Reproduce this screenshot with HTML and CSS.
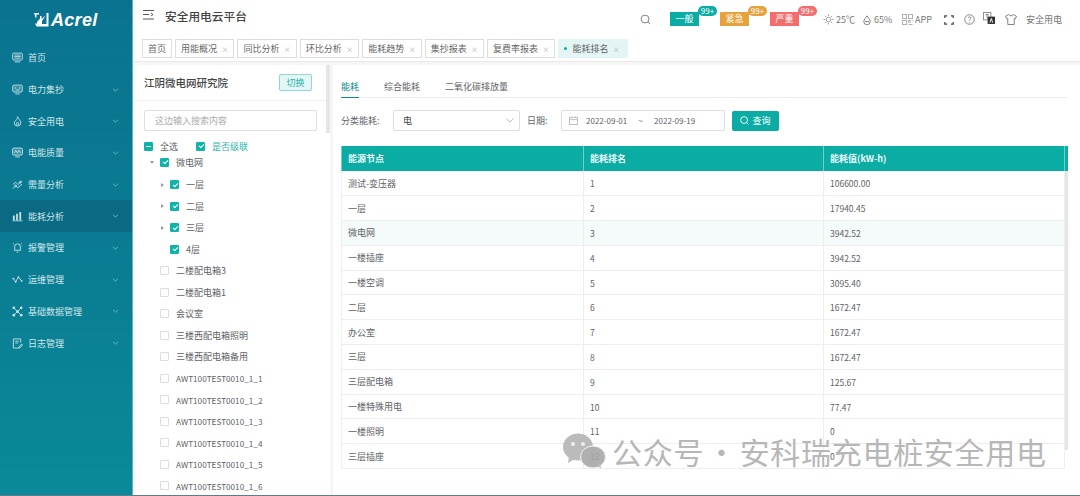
FILE: index.html
```html
<!DOCTYPE html>
<html lang="zh-CN">
<head>
<meta charset="utf-8">
<title>安全用电云平台</title>
<link rel="stylesheet" href="styles.css">
</head>
<body>
<div class="app">
  <aside class="sidebar">
    <div class="logo">
      <svg class="logo-mark" viewBox="0 0 15 14"><path d="M0 0h5v1.500H2.500V4L2 5.500zM14.500 0v13.500H2.500L1 10.500h2V9l3-3.500V3H7.500v2.500h1L10 3.500h1L8 8v3h4.500V0z"/></svg>
      <span class="logo-text">Acrel</span>
    </div>
    <nav class="menu">
      <a class="menu-item"><svg class="mi" viewBox="0 0 12 12"><rect x=".8" y="1.200" width="10.400" height="7.600" rx="1"/><path d="M2.500 3.300h7M2.500 5h7M2.500 6.700h7M3 10.800h6"/></svg><span>首页</span></a>
      <a class="menu-item"><svg class="mi" viewBox="0 0 12 12"><rect class="mi-soft" x=".8" y="1.200" width="10.400" height="7.600" rx="1.500"/><path d="M3.500 3.500v1.500M8.500 3.500v1.500M4 6.500h4M3.500 10.800h5"/></svg><span>电力集抄</span><svg class="chev" viewBox="0 0 8 5"><path d="M1 1l3 3 3-3"/></svg></a>
      <a class="menu-item"><svg class="mi" viewBox="0 0 12 12"><path d="M6 .8c.5 2 3.500 3.700 3.500 6.700a3.500 3.500 0 0 1-7 0C2.500 6 4 5.500 4.500 4.300 5.500 3.800 6 2.300 6 .8z"/><path d="M6 6.500c.8.800 1.200 1.400 1.200 2a1.200 1.200 0 0 1-2.400 0c0-.6.400-1.200 1.200-2z"/></svg><span>安全用电</span><svg class="chev" viewBox="0 0 8 5"><path d="M1 1l3 3 3-3"/></svg></a>
      <a class="menu-item"><svg class="mi" viewBox="0 0 12 12"><rect class="mi-soft" x=".5" y="1.200" width="11" height="7.600" rx="1.500"/><path d="M2.500 6.500l1.500-3L6 6.500l1.500-3 2 3M3.500 10.800h5"/></svg><span>电能质量</span><svg class="chev" viewBox="0 0 8 5"><path d="M1 1l3 3 3-3"/></svg></a>
      <a class="menu-item"><svg class="mi" viewBox="0 0 12 12"><path d="M1 6l3-2.500L6.500 6 11 2M1 10.500l3-3 2.500 2L11 5.500"/><circle cx="9" cy="3.500" r="1"/><circle cx="4" cy="7.500" r="1"/></svg><span>需量分析</span><svg class="chev" viewBox="0 0 8 5"><path d="M1 1l3 3 3-3"/></svg></a>
      <a class="menu-item active"><svg class="mi mi-fill" viewBox="0 0 12 12"><path d="M1 5h2v5H1zM4.500 3h2v7h-2zM8 1h2v9H8zM.5 10.300h11v1H.5z"/></svg><span>能耗分析</span><svg class="chev" viewBox="0 0 8 5"><path d="M1 1l3 3 3-3"/></svg></a>
      <a class="menu-item"><svg class="mi" viewBox="0 0 12 12"><path d="M3 8.500V5a3 3 0 0 1 6 0v3.500M2 9h8M1.500 1.500L2.500 2.500M10.500 1.500L9.500 2.500M1 4h.5M10.500 4h.5M5 11h2"/></svg><span>报警管理</span><svg class="chev" viewBox="0 0 8 5"><path d="M1 1l3 3 3-3"/></svg></a>
      <a class="menu-item"><svg class="mi" viewBox="0 0 12 12"><path d="M1.500 5l2.500 3.500 3-5 3.500 4"/><circle class="mi-dot" cx="1.500" cy="5" r="1"/><circle class="mi-dot" cx="4" cy="8.500" r="1"/><circle class="mi-dot" cx="7" cy="3.500" r="1"/><circle class="mi-dot" cx="10.500" cy="7.500" r="1"/></svg><span>运维管理</span><svg class="chev" viewBox="0 0 8 5"><path d="M1 1l3 3 3-3"/></svg></a>
      <a class="menu-item"><svg class="mi" viewBox="0 0 12 12"><path d="M2 2l8 8M10 2l-8 8"/><circle class="mi-dot" cx="2" cy="2" r="1.500"/><circle class="mi-dot" cx="10" cy="2" r="1.500"/><circle class="mi-dot" cx="2" cy="10" r="1.500"/><circle class="mi-dot" cx="10" cy="10" r="1.500"/><circle class="mi-dot" cx="6" cy="6" r="1.500"/></svg><span>基础数据管理</span><svg class="chev" viewBox="0 0 8 5"><path d="M1 1l3 3 3-3"/></svg></a>
      <a class="menu-item"><svg class="mi" viewBox="0 0 12 12"><path d="M9.500 5V1h-8v10h6M3.500 3.500h4M3.500 5.500h3M7.500 10l3-3.500 1 1-3 3.500H7.500z"/></svg><span>日志管理</span><svg class="chev" viewBox="0 0 8 5"><path d="M1 1l3 3 3-3"/></svg></a>
    </nav>
  </aside>

  <div class="main">
    <header class="topbar">
      <svg class="fold" viewBox="0 0 12 10"><path d="M0 .5h11M0 4.500h6M0 9h11M8 3l2 1.500L8 6"/></svg>
      <h1 class="platform">安全用电云平台</h1>
      <svg class="search-ico" viewBox="0 0 12 12"><circle cx="5.500" cy="5.500" r="4.300"/><path d="M8.700 8.700l2.300 2.300"/></svg>
      <div class="alarms">
        <span class="alarm teal">一般<b>99+</b></span>
        <span class="alarm orange">紧急<b>99+</b></span>
        <span class="alarm red">严重<b>99+</b></span>
      </div>
      <div class="tools">
        <span class="tool"><svg class="ti" viewBox="0 0 12 12"><circle cx="6" cy="6" r="2.500"/><path d="M6 .5v2M6 9.500v2M.5 6h2M9.500 6h2M2 2l1.500 1.500M8.500 8.500L10 10M10 2L8.500 3.500M3.500 8.500L2 10"/></svg>25℃</span>
        <span class="tool tool-drop"><svg class="ti ti-sm" viewBox="0 0 10 12"><path d="M5 .8C6 3 9 5 9 8a4 4 0 0 1-8 0C1 5 4 3 5 .8z"/><path class="drop-in" d="M2.500 8h5"/></svg>65%</span>
        <span class="tool tool-app"><svg class="ti ti-app" viewBox="0 0 12 12"><rect x=".5" y=".5" width="4.500" height="4.500"/><rect x="7" y=".5" width="4.500" height="4.500"/><rect x=".5" y="7" width="4.500" height="4.500"/><path d="M7 7h2v2H7zM11.500 7v1M7 11.500h4.500"/></svg>APP</span>
        <svg class="ti ti-expand" viewBox="0 0 10 10"><path d="M.8 3V.8H3M7 .8h2.200V3M.8 7v2.200H3M7 9.200h2.200V7"/></svg>
        <svg class="ti ti-help" viewBox="0 0 12 12"><circle cx="6" cy="6" r="5.200"/><path d="M4.500 4.500a1.500 1.500 0 1 1 2.200 1.400c-.5.300-.7.600-.7 1.100M6 8.500v.8"/></svg>
        <svg class="ti ti-lang" viewBox="0 0 13 13"><rect class="lang-a" x=".5" y=".5" width="8" height="8"/><path class="lang-a" d="M2.500 3h4M4.500 2v5"/><rect class="lang-b" x="5" y="5" width="8" height="8"/><path class="lang-c" d="M7.500 11.500L9 7l1.500 4.500"/></svg>
        <svg class="ti ti-shirt" viewBox="0 0 13 12"><path d="M4 .5L.5 2.500l1.500 3 1-.5v6.500h7V5l1 .5 1.500-3L9 .5c-.5 2-4.500 2-5 0z"/></svg>
        <span class="user">安全用电</span>
      </div>
    </header>

    <div class="tabs">
      <span class="tab">首页</span>
      <span class="tab">用能概况<i>×</i></span>
      <span class="tab">同比分析<i>×</i></span>
      <span class="tab">环比分析<i>×</i></span>
      <span class="tab">能耗趋势<i>×</i></span>
      <span class="tab">集抄报表<i>×</i></span>
      <span class="tab">复费率报表<i>×</i></span>
      <span class="tab current"><em></em>能耗排名<i>×</i></span>
    </div>

    <div class="content">
      <section class="tree-panel">
        <div class="org">
          <strong>江阴微电网研究院</strong>
          <button class="switch">切换</button>
        </div>
        <div class="tree-body">
          <div class="search-box">这边输入搜索内容</div>
          <div class="tree-head">
            <span class="cb partial"></span><span class="all">全选</span>
            <span class="cb on"></span><span class="cascade">是否级联</span>
          </div>
          <ul class="tree">
            <li class="l1 first"><em class="caret down"></em><span class="cb on"></span>微电网</li>
            <li class="l2"><em class="caret"></em><span class="cb on"></span>一层</li>
            <li class="l2"><em class="caret"></em><span class="cb on"></span>二层</li>
            <li class="l2"><em class="caret"></em><span class="cb on"></span>三层</li>
            <li class="l2"><em class="caret none"></em><span class="cb on"></span>4层</li>
            <li class="l1"><span class="cb"></span>二楼配电箱3</li>
            <li class="l1"><span class="cb"></span>二楼配电箱1</li>
            <li class="l1"><span class="cb"></span>会议室</li>
            <li class="l1"><span class="cb"></span>三楼西配电箱照明</li>
            <li class="l1"><span class="cb"></span>三楼西配电箱备用</li>
            <li class="l1 code"><span class="cb"></span>AWT100TEST0010_1_1</li>
            <li class="l1 code"><span class="cb"></span>AWT100TEST0010_1_2</li>
            <li class="l1 code"><span class="cb"></span>AWT100TEST0010_1_3</li>
            <li class="l1 code"><span class="cb"></span>AWT100TEST0010_1_4</li>
            <li class="l1 code"><span class="cb"></span>AWT100TEST0010_1_5</li>
            <li class="l1 code"><span class="cb"></span>AWT100TEST0010_1_6</li>
          </ul>
        </div>
        <div class="tree-scroll"></div>
      </section>

      <section class="data-panel">
        <div class="subtabs">
          <span class="subtab on">能耗</span>
          <span class="subtab">综合能耗</span>
          <span class="subtab">二氧化碳排放量</span>
        </div>
        <div class="filters">
          <label class="f-label">分类能耗:</label>
          <div class="select">电<svg viewBox="0 0 8 5"><path d="M.5 .5L4 4 7.500 .5"/></svg></div>
          <label class="f-label date-label">日期:</label>
          <div class="range">
            <svg viewBox="0 0 10 10"><rect x=".5" y="1.500" width="9" height="8"/><path d="M.5 4h9M3 .5v2M7 .5v2"/></svg>
            <span>2022-09-01</span><span class="tilde">~</span><span>2022-09-19</span>
          </div>
          <button class="query"><svg viewBox="0 0 10 10"><circle cx="4.500" cy="4.500" r="3.800"/><path d="M7.300 7.300l2 2"/></svg>查询</button>
        </div>
        <div class="table-wrap">
          <table class="rank">
            <thead><tr><th>能源节点</th><th>能耗排名</th><th>能耗值(kW-h)</th></tr></thead>
            <tbody>
              <tr><td>测试-变压器</td><td>1</td><td>106600.00</td></tr>
              <tr><td>一层</td><td>2</td><td>17940.45</td></tr>
              <tr class="hover"><td>微电网</td><td>3</td><td>3942.52</td></tr>
              <tr><td>一楼插座</td><td>4</td><td>3942.52</td></tr>
              <tr><td>一楼空调</td><td>5</td><td>3095.40</td></tr>
              <tr><td>二层</td><td>6</td><td>1672.47</td></tr>
              <tr><td>办公室</td><td>7</td><td>1672.47</td></tr>
              <tr><td>三层</td><td>8</td><td>1672.47</td></tr>
              <tr><td>三层配电箱</td><td>9</td><td>125.67</td></tr>
              <tr><td>一楼特殊用电</td><td>10</td><td>77.47</td></tr>
              <tr><td>一楼照明</td><td>11</td><td>0</td></tr>
              <tr><td>三层插座</td><td>12</td><td>0</td></tr>
            </tbody>
          </table>
          <div class="head-gutter"></div>
          <div class="table-scroll"></div>
        </div>
      </section>
    </div>
  </div>
</div>
<div class="edge"></div>

<div class="watermark">
  <svg viewBox="0 0 44 36"><ellipse class="wm-a" cx="16" cy="14" rx="15" ry="13.500"/><path class="wm-a" d="M7 23l-1 7 8-5z"/><circle class="wm-d" cx="11" cy="11" r="2"/><circle class="wm-d" cx="21" cy="11" r="2"/><ellipse class="wm-b" cx="31" cy="24" rx="12.500" ry="11"/><path class="wm-a" d="M36 33l3 3-1-6z"/></svg>
  <span>公众号 · 安科瑞充电桩安全用电</span>
</div>
</body>
</html>
```
FILE: styles.css
```css
* { box-sizing: border-box; }
html, body { margin: 0; height: 496px; overflow: hidden; }
body {
  font-family: "Noto Sans CJK SC", "Noto Sans", sans-serif;
  font-size: 9px;
  color: #606266;
  background: #fff;
  display: flex;
  flex-direction: column;
}
.app { display: flex; height: 495px; }
.edge { height: 1px; background: #66788a; }
ul { list-style: none; margin: 0; padding: 0; }
svg { display: block; fill: none; stroke: currentColor; stroke-width: 1; flex: none; }

/* sidebar */
.sidebar {
  width: 133px;
  flex: none;
  background: linear-gradient(180deg, #0a7490 0%, #0a7a92 45%, #0a8a98 100%);
  border-right: 1px solid #58b4c0;
  color: #cfe6ea;
}
.logo { height: 42px; padding: 13px 0 0 34px; display: flex; align-items: flex-start; gap: 2px; color: #fff; }
.logo-mark { width: 15px; height: 14px; stroke: none; fill: #fff; }
.logo-text {
  font-family: "Liberation Sans", Arial, sans-serif;
  font-weight: 700; font-style: italic; font-size: 18px; line-height: 14px; letter-spacing: .3px;
}
.menu { display: flex; flex-direction: column; }
.menu-item { height: 31.700px; display: flex; align-items: center; padding-left: 12px; font-size: 9px; }
.menu-item span { margin-left: 5px; flex: 1; }
.menu-item.active { background: #0a6a84; }
.mi { width: 11px; height: 11px; color: #c4e0e6; stroke-width: 1; }
.mi-soft { fill: rgba(196, 224, 230, .25); }
.mi-dot { fill: #c4e0e6; stroke: none; }
.mi-fill { fill: #c4e0e6; stroke: none; }
.chev { width: 7px; height: 4px; margin-right: 13px; color: #8cc4d0; }

/* main column */
.main { flex: 1; min-width: 0; display: flex; flex-direction: column; }
.topbar { height: 36px; flex: none; display: flex; align-items: center; padding-left: 10px; position: relative; }
.fold { width: 12px; height: 10px; color: #555; margin-top: -7px; }
.platform { margin: -5px 0 0 10px; font-size: 11.700px; font-weight: 500; color: #444; width: 475px; }
.search-ico { width: 11px; height: 11px; color: #777; margin-top: 3px; }
.alarms { display: flex; margin: 2px 0 0 19px; gap: 21px; }
.alarm { width: 29px; height: 14px; color: #fff; line-height: 14px; text-align: center; position: relative; font-size: 9px; }
.alarm b {
  position: absolute; left: 28px; top: -6px; width: 19px; height: 10px;
  border-radius: 5px; background: inherit; font-weight: 400; font-size: 8px; line-height: 10px;
}
.teal { background: #0aaca4; }
.orange { background: #e6a23c; }
.red { background: #f56c6c; }
.tools { display: flex; align-items: center; margin: 3px 0 0 24px; color: #777; }
.tool { display: flex; align-items: center; gap: 2px; width: 40px; }
.tool-drop { gap: 3px; width: 39px; }
.tool-app { width: 42px; }
.ti { width: 11px; height: 11px; color: #999; }
.ti-sm { width: 8px; height: 10px; color: #666; }
.drop-in { stroke: #666; }
.ti-app { color: #aaa; }
.ti-expand { width: 10px; height: 10px; color: #444; stroke-width: 1.200; }
.ti-help { margin-left: 10px; color: #777; }
.ti-lang { width: 12px; height: 12px; margin: -3px 0 0 8px; }
.lang-a { stroke: #888; }
.lang-b { fill: #333; stroke: none; }
.lang-c { stroke: #fff; }
.ti-shirt { width: 12px; height: 11px; margin-left: 10px; color: #777; }
.user { margin-left: 9px; white-space: nowrap; }

/* tabs */
.tabs { height: 26px; flex: none; display: flex; gap: 3px; padding: 3px 0 0 9px; border-bottom: 1px solid #e8e8e8; align-items: flex-start; }
.tab { height: 19px; padding: 0 5px; border: 1px solid #ddd; display: flex; align-items: center; color: #666; font-size: 9px; white-space: nowrap; background: #fff; }
.tab i { font-style: normal; font-size: 7px; color: #aaa; margin-left: 4.400px; }
.tab.current { background: #e3f5f4; border-color: #e3f5f4; padding-right: 7px; }
.tab em { width: 3px; height: 3px; border-radius: 50%; background: #0aaca4; margin-right: 5px; }

/* content */
.content { flex: 1; min-height: 0; display: flex; background: #f6f6f6; padding-top: 3px; gap: 3px; }

.tree-panel { width: 197px; flex: none; background: #fff; position: relative; overflow: hidden; }
.tree-scroll { position: absolute; right: 0; top: 0; width: 4px; height: 68px; background: #e6e6e6; }
.org { height: 36px; padding: 0 18px 0 11px; display: flex; align-items: center; justify-content: space-between; border-bottom: 1px solid #f0f0f0; }
.org strong { font-size: 10.500px; font-weight: 500; color: #444; }
.switch { width: 33px; height: 17px; padding: 0; font: inherit; color: #2db5ad; background: #e3f5f4; border: 1px solid #8ed8d3; border-radius: 2px; }
.tree-body { padding: 9px 13px 0 11px; }
.search-box { height: 21px; border: 1px solid #ddd; border-radius: 2px; line-height: 19px; padding-left: 10px; color: #aaa; }
.tree-head { display: flex; align-items: center; height: 14px; margin-top: 8px; }
.all { margin: 0 18px 0 7px; }
.cascade { margin-left: 7px; color: #2db5ad; }
.cb { width: 9px; height: 9px; flex: none; border: 1px solid #ddd; border-radius: 1px; background: #fff; position: relative; }
.cb.on, .cb.partial { background: #0fb3aa; border-color: #0fb3aa; }
.cb.on::after { content: ""; position: absolute; left: 2.500px; top: 0.500px; width: 2px; height: 4px; border: solid #fff; border-width: 0 1px 1px 0; transform: rotate(45deg); }
.cb.partial::after { content: ""; position: absolute; left: 1px; top: 3px; width: 5px; height: 1px; background: #fff; }
.tree { margin-top: 3px; }
.tree li { height: 21.500px; display: flex; align-items: center; white-space: nowrap; }
.tree li .cb { margin-right: 7px; }
.tree .first { height: 12px; margin-bottom: 6px; }
.tree .l1 { padding-left: 16px; }
.tree .first.l1 { padding-left: 6px; }
.tree .l2 { padding-left: 17px; }
.tree .code { font-size: 8.200px; }
.caret { width: 0; height: 0; flex: none; margin-right: 6px; border: solid transparent; border-width: 2.500px 0 2.500px 3px; border-left-color: #999; }
.caret.down { border-width: 3px 2.500px 0; border-color: #999 transparent transparent; margin-right: 6px; }
.caret.none { border-color: transparent; }

.data-panel { flex: 1; min-width: 0; background: #fff; padding: 0 12px 0 8px; }
.subtabs { height: 33px; display: flex; gap: 25px; align-items: flex-end; border-bottom: 1px solid #eee; }
.subtab { height: 17px; }
.subtab.on { color: #0a8a88; border-bottom: 1px solid #0a8a88; margin-bottom: -1px; height: 18px; }
.filters { display: flex; align-items: center; height: 21px; margin-top: 12px; }
.f-label { width: 52px; flex: none; }
.date-label { width: 34px; margin-left: 7px; }
.select { width: 127px; height: 21px; border: 1px solid #ddd; border-radius: 2px; padding: 0 0 0 9px; display: flex; align-items: center; justify-content: space-between; color: #444; }
.select svg { width: 8px; height: 5px; margin-right: 5px; color: #bbb; }
.range { width: 164px; height: 21px; border: 1px solid #ddd; border-radius: 2px; padding-left: 7px; display: flex; align-items: center; font-size: 8px; }
.range svg { width: 9px; height: 9px; color: #bbb; margin-right: 8px; }
.tilde { width: 27px; text-align: center; }
.query { width: 47px; height: 20px; margin-left: 7px; padding: 0; border: 0; border-radius: 2px; background: #0aaca4; color: #fff; font: inherit; display: flex; align-items: center; justify-content: center; gap: 3px; }
.query svg { width: 9px; height: 9px; }

.table-wrap { margin-top: 15px; position: relative; width: 727px; }
.rank { width: 724px; border-collapse: collapse; table-layout: fixed; }
.rank th { height: 25px; background: #0aaca4; color: #eafafa; text-align: left; font-weight: 700; padding: 0 6px; border-right: 1px solid #6fd0ca; }
.rank th:first-child { width: 242px; border-left: 1px solid #6fd0ca; }
.rank th:nth-child(2) { width: 240px; }
.rank td { height: 24.800px; padding: 0 6px; border-right: 1px solid #eee; border-bottom: 1px solid #eee; }
.rank td + td { font-size: 8.500px; }
.rank td:first-child { border-left: 1px solid #eee; }
.rank .hover td { background: #f5fafa; }
.head-gutter { position: absolute; right: 0; top: 0; width: 3px; height: 25px; background: #0aaca4; }
.table-scroll { position: absolute; right: 0; top: 25px; width: 3px; height: 279px; background: #e6e6e6; }

/* watermark */
.watermark { position: absolute; left: 562px; top: 432px; display: flex; align-items: center; gap: 6px; color: #b0b0b0; font-size: 30px; letter-spacing: .7px; word-spacing: -5px; line-height: 38px; white-space: nowrap; opacity: .9; }
.watermark svg { width: 44px; height: 36px; stroke: none; }
.wm-a { fill: #b4b4b4; }
.wm-b { fill: #a8a8a8; stroke: #f4f4f4; }
.wm-d { fill: #eee; }
```
